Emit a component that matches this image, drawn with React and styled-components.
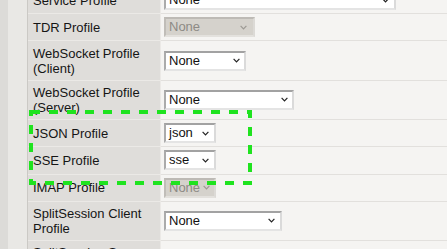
import React from "react";
import styled, { createGlobalStyle } from "styled-components";

const GlobalStyle = createGlobalStyle`
  html, body { margin: 0; padding: 0; }
  body {
    background: #f5f4f2;
    font-family: "Liberation Sans", Arial, Helvetica, sans-serif;
    color: #151515;
  }
`;

const Viewport = styled.div`
  position: relative;
  height: 249px;
  overflow: hidden;
`;

const Page = styled.div`
  display: flex;
  margin-top: -13px;
`;

const Gutter = styled.div`
  width: 19px;
  flex: none;
  background: #e9e8e5;
  border-left: 8px solid #dcdbd8;
  border-right: 1px solid #cbc9c5;
`;

const Table = styled.div`
  flex: 1;
  display: grid;
  grid-template-columns: 133px 1fr;
  align-content: start;
`;

const Label = styled.div`
  display: flex;
  align-items: center;
  background: #dfddda;
  border-right: 1px solid #ebe9e6;
  border-bottom: 1px solid #ebe9e6;
  padding: 4.2px 5px;
  font-size: 13px;
  line-height: 15px;
`;

const Value = styled.div`
  display: flex;
  align-items: center;
  background: #f5f4f2;
  border-bottom: 1px solid #e2e0dd;
  padding: 3.1px 3px;
`;

const SelectBox = styled.div`
  box-sizing: border-box;
  width: ${(p) => p.$w}px;
  height: 20px;
  display: flex;
  align-items: center;
  justify-content: space-between;
  padding: 0 ${(p) => p.$chev}px 0 3px;
  border: 2px solid;
  border-color: ${(p) =>
    p.$disabled
      ? "#bdbab5 #dcdad6 #e3e1dd #c0bdb8"
      : "#a2a2a2 #dadada #e4e4e4 #ababab"};
  background: ${(p) => (p.$disabled ? "#d5d2cc" : "#ffffff")};
  color: ${(p) => (p.$disabled ? "#8d8a85" : "#111111")};
  font-size: 13px;
  line-height: 16px;
`;

const SelectText = styled.span`
  white-space: nowrap;
`;

const Chevron = styled.svg`
  flex: none;
  display: block;
  margin-left: 2px;
`;

const Overlay = styled.svg`
  position: absolute;
  left: 0;
  top: 0;
  pointer-events: none;
`;

function Select({ value, width, disabled, chev = 4 }) {
  return (
    <SelectBox $w={width} $disabled={disabled} $chev={chev}>
      <SelectText>{value}</SelectText>
      <Chevron width="7" height="5" viewBox="0 0 7 5">
        <path
          d="M0.6 0.8 L3.5 3.8 L6.4 0.8"
          fill="none"
          stroke={disabled ? "#9c9993" : "#222"}
          strokeWidth="1.2"
        />
      </Chevron>
    </SelectBox>
  );
}

const rows = [
  { label: "Service Profile", value: "None", width: 232, chev: 5 },
  { label: "TDR Profile", value: "None", width: 91, disabled: true, chev: 6 },
  { label: "WebSocket Profile (Client)", value: "None", width: 82, chev: 4 },
  { label: "WebSocket Profile (Server)", value: "None", width: 130, chev: 4 },
  { label: "JSON Profile", value: "json", width: 52, chev: 5 },
  { label: "SSE Profile", value: "sse", width: 52, chev: 5 },
  { label: "IMAP Profile", value: "None", width: 52, disabled: true, chev: 4 },
  { label: "SplitSession Client Profile", value: "None", width: 118, chev: 5 },
  { label: "SplitSession Server Profile", value: "None", width: 118, chev: 5 },
];

export default function App() {
  return (
    <>
      <GlobalStyle />
      <Viewport>
        <Page>
          <Gutter />
          <Table>
            {rows.map((r) => (
              <React.Fragment key={r.label}>
                <Label>{r.label}</Label>
                <Value>
                  <Select
                    value={r.value}
                    width={r.width}
                    disabled={r.disabled}
                    chev={r.chev}
                  />
                </Value>
              </React.Fragment>
            ))}
          </Table>
        </Page>
        <Overlay width="447" height="249" viewBox="0 0 447 249">
          <path
            d="M31 112 H250 V183 H31 Z"
            fill="none"
            stroke="#1fe31f"
            strokeWidth="4"
            strokeDasharray="9 9"
          />
        </Overlay>
      </Viewport>
    </>
  );
}
